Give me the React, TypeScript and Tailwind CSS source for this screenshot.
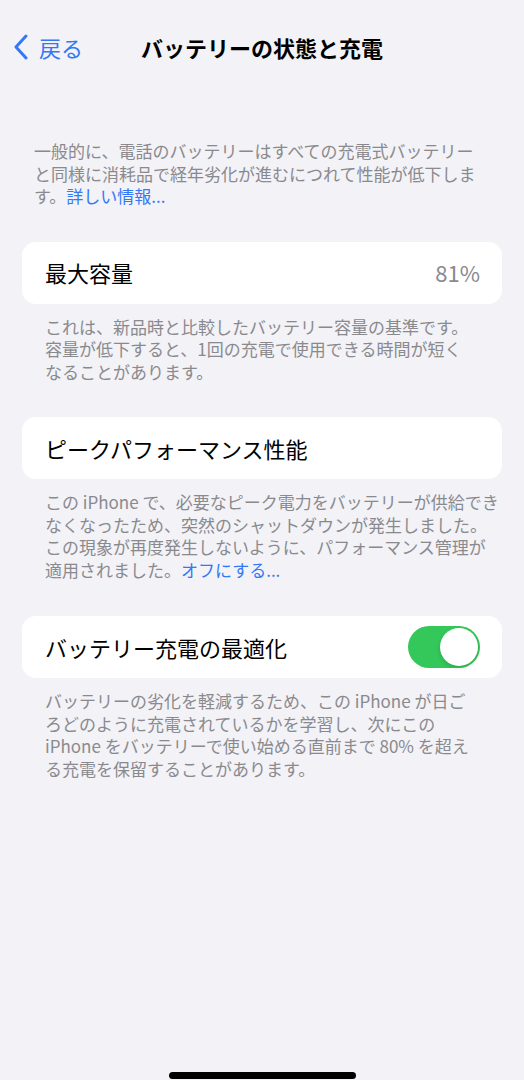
const font = { fontFamily: '"Noto Sans CJK JP", "Noto Sans", sans-serif' };

const Chevron = () => (
  <svg width="16" height="26" viewBox="0 0 16 26" fill="none">
    <path d="M13 2 L3 13 L13 24" stroke="#3478f6" strokeWidth="3" strokeLinecap="round" strokeLinejoin="round" />
  </svg>
);

const Toggle = () => (
  <div className="w-[72px] h-[42px] rounded-full bg-[#34c759] p-[2px] flex justify-end">
    <div className="w-[38px] h-[38px] rounded-full bg-white shadow-[0_2px_4px_rgba(0,0,0,0.15)]" />
  </div>
);

const Lines = ({ lines, className }: { lines: React.ReactNode[]; className: string }) => (
  <div className={className}>
    {lines.map((l, i) => (
      <div key={i} className="whitespace-nowrap h-[22.5px]">
        {l}
      </div>
    ))}
  </div>
);

const Card = ({ label, right }: { label: string; right?: React.ReactNode }) => (
  <div className="mx-[22px] h-[62px] rounded-[14px] bg-white flex items-center justify-between pl-[23px] pr-[22px]">
    <span className="text-[22px] text-black">{label}</span>
    {right}
  </div>
);

const footer = 'px-[45px] pt-[12px] text-[17px] leading-[22.5px] text-[#8a8a8e]';
const link = 'text-[#3478f6]';

export default function App() {
  return (
    <div className="w-[524px] h-[1080px] bg-[#f2f2f7] flex flex-col" style={font}>
      <div className="mt-[22px] h-[50px] grid grid-cols-[1fr_auto_1fr] items-center">
        <div className="flex items-center gap-[10px] pl-[13px]">
          <Chevron />
          <span className="text-[22px] text-[#3478f6]">戻る</span>
        </div>
        <span className="text-[22px] font-bold text-black">バッテリーの状態と充電</span>
        <div />
      </div>

      <Lines
        className="mt-[68px] px-[34px] text-[17px] leading-[22.5px] text-[#8a8a8e]"
        lines={[
          '一般的に、電話のバッテリーはすべての充電式バッテリー',
          'と同様に消耗品で経年劣化が進むにつれて性能が低下しま',
          <>
            す。<span className={link}>詳しい情報...</span>
          </>,
        ]}
      />

      <div className="mt-[34px]">
        <Card label="最大容量" right={<span className="text-[22px] text-[#8a8a8e]">81%</span>} />
      </div>
      <Lines
        className={footer}
        lines={[
          'これは、新品時と比較したバッテリー容量の基準です。',
          '容量が低下すると、1回の充電で使用できる時間が短く',
          'なることがあります。',
        ]}
      />

      <div className="mt-[34px]">
        <Card label="ピークパフォーマンス性能" />
      </div>
      <Lines
        className={footer}
        lines={[
          'この iPhone で、必要なピーク電力をバッテリーが供給でき',
          'なくなったため、突然のシャットダウンが発生しました。',
          'この現象が再度発生しないように、パフォーマンス管理が',
          <>
            適用されました。<span className={link}>オフにする...</span>
          </>,
        ]}
      />

      <div className="mt-[35px]">
        <Card label="バッテリー充電の最適化" right={<Toggle />} />
      </div>
      <Lines
        className={footer}
        lines={[
          'バッテリーの劣化を軽減するため、この iPhone が日ご',
          'ろどのように充電されているかを学習し、次にこの',
          'iPhone をバッテリーで使い始める直前まで 80% を超え',
          'る充電を保留することがあります。',
        ]}
      />

      <div className="mt-auto mb-[1px] flex justify-center">
        <div className="w-[187px] h-[7px] rounded-full bg-black" />
      </div>
    </div>
  );
}
